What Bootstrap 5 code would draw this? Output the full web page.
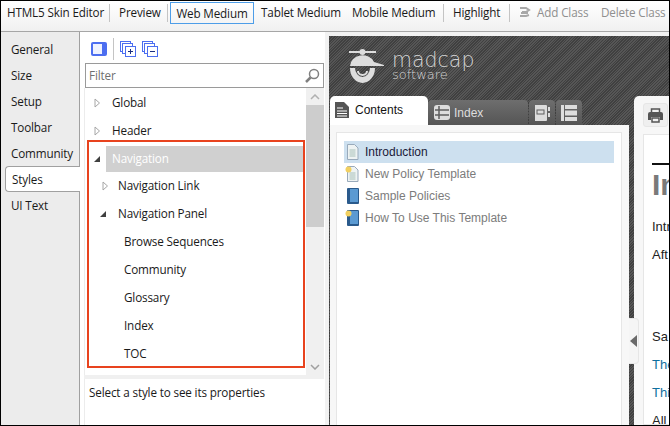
<!DOCTYPE html>
<html lang="en">
<head>
<meta charset="utf-8">
<title>HTML5 Skin Editor</title>
<link href="https://cdn.jsdelivr.net/npm/bootstrap@5.3.0/dist/css/bootstrap.min.css" rel="stylesheet">
<style>
html,body{margin:0;height:100%;overflow:hidden;background:#000}
body{font-family:"Open Sans","Noto Sans",sans-serif;font-size:11.7px;color:#1a1a1a;letter-spacing:-.15px}
.app-win{width:670px;height:426px;border:1px solid #000;overflow:hidden;background:#ececec;display:flex;flex-direction:column}
.top-bar{height:31px;flex:none;background:linear-gradient(#fff,#f0f0f0);display:flex;align-items:flex-start;padding-top:1px;border-bottom:1px solid #a6a6a6;white-space:nowrap}
.top-item{height:21px;line-height:21px;display:block}
.top-sep{width:1px;height:18px;margin-top:2px;background:#c4c4c4;flex:none}
.top-on{border:1px solid #4d9de8;height:22px;line-height:20px;width:84px;text-align:center;margin-left:2px}
.top-off{color:#8f8f8f}
.ti-a{margin-left:6px;width:102px}
.ti-b{margin-left:9px;width:48px}
.ti-c{margin-left:7px;width:91px}
.ti-d{width:91px}
.ti-e{margin-left:9px;width:56px}
.ti-f{margin-left:6px;width:64px}
.ti-ic{margin:4px 0 0 8px;flex:none}
.work{flex:1;display:flex;min-height:0}
.side-tabs{width:79px;flex:none;padding-top:4px;border-right:1px solid #a0a0a0}
.side-tab{height:26px;line-height:26px;padding-left:10px}
.side-tab-on{background:#fff;border:1px solid #a0a0a0;border-right:0;border-radius:4px 0 0 4px;position:relative;line-height:24px;padding-left:6px;width:76px;margin-left:4px}
.ed-panel{width:245px;flex:none;background:#fff;display:flex;flex-direction:column;padding:0 1px 0 4px;position:relative}
.ed-tools{height:31px;flex:none;display:flex;align-items:center;gap:4px;padding:2px 0 0 11px;margin-left:-4px}
.ed-tools svg{display:block}
.ed-rule{width:1px;height:22px;background:#c4c4c4;margin:0 2px}
.ed-gap{margin-left:2px}
.filter-box{height:25px;flex:none;margin-left:1px;border:1px solid #9a9a9a;display:flex;align-items:center;justify-content:space-between;padding:0 3px;color:#6f6f6f}
.tree-wrap{flex:none;height:287px;display:flex;border-left:1px solid #ececec}
.tree-list{flex:1;position:relative;min-width:0;padding-top:1px}
.tree-row{height:27.9px;display:flex;align-items:center}
.tree-l0{padding-left:27px}
.tree-l1{padding-left:33px}
.tree-l2{padding-left:39px}
.tree-sel{background:#d0d0d0;color:#fff;margin:1px 3px .4px 21px;padding-left:6px;height:25.9px}
.tree-arrow{position:absolute}
.arr-a{left:9px}
.arr-b{left:8px}
.arr-c{left:17px}
.arr-d{left:14px}
.hl-box{position:absolute;left:2px;top:52px;width:218px;height:228px;border:2px solid #e8431e;pointer-events:none}
.scroll-y{width:18px;flex:none;background:#f0f0f0;display:flex;flex-direction:column}
.scroll-btn{height:17px;flex:none;display:flex;align-items:center;justify-content:center}
.scroll-thumb{height:122px;background:#cdcdcd;flex:none}
.scroll-rest{flex:1}
.split-h{height:4px;flex:none;background:#f0f0f0}
.props{flex:1;padding:5px 4px;border-left:1px solid #ececec}
.preview{flex:1;min-width:0;display:flex;flex-direction:column;background:#f2f2f2;padding:4px 0 0 4px;overflow:hidden}
.hatch{flex:1;min-height:0;background:#4a4a4a repeating-linear-gradient(135deg,#404040 0 1px,#565656 1px 2px);display:flex;flex-direction:column;font-family:"Liberation Sans",sans-serif;position:relative;letter-spacing:0;font-size:12px}
.logo-row{height:60px;flex:none;padding:8px 0 0 20px;display:flex;align-items:flex-start}
.logo-text{margin:6px 0 0 7px;color:#d4d4d4;font-family:"DejaVu Sans","Lato",sans-serif;font-weight:200}
.logo-a{font-size:20.5px;line-height:20px;height:20px}
.logo-b{font-size:13px;line-height:9px;height:9px}
.prev-body{flex:1;display:flex;min-height:0;padding-left:1px}
.toc-col{width:299px;flex:none;display:flex;flex-direction:column}
.toc-tabs{height:29px;flex:none;display:flex;align-items:flex-end}
.toc-tab{height:25px;background:linear-gradient(#6e6e6e,#555);border-radius:4px 4px 0 0;color:#ddd;display:flex;align-items:center;justify-content:center;margin-right:1px;gap:4px}
.toc-tab-on{height:29px;background:#fff;color:#111;width:98px;gap:6px;justify-content:flex-start;padding:0 0 2px 5px;margin-right:0;border-radius:5px 5px 0 0}
.toc-tab-idx{width:100px;justify-content:flex-start;padding-left:6px}
.toc-tab-ic{width:26px}
.toc-outer{flex:1;background:#f7f7f7;padding:7px 7px 0 6px;min-height:0}
.toc-inner{height:100%;background:#fff;border:1px solid #e6e6e6;border-bottom:0;padding:8px 7px}
.toc-row{height:22px;display:flex;align-items:center;gap:5px;color:#7c7c7c;padding-left:1px}
.toc-row-on{background:#cde0ef;color:#1a1a3a}
.topic-col{flex:1;margin-left:5px;background:#f7f7f7;border-radius:5px 0 0 0;min-width:0;display:flex;flex-direction:column}
.print-btn{width:25px;height:24px;margin:7px 0 0 9px;background:#efefef;border:1px solid #e6e6e6;border-radius:3px;display:flex;align-items:center;justify-content:center;flex:none}
.topic-page{flex:1;background:#fff;margin:7px 0 0 9px;border:1px solid #e6e6e6;border-right:0;padding:28px 0 0 8px;min-height:0;overflow:hidden;white-space:nowrap;font-size:13px;color:#222}
.topic-title{border-top:2px solid #111;font-size:30px;font-weight:700;color:#7a7a7a;line-height:35px;height:50px;padding-top:2px}
.topic-line{height:28px;line-height:28px;color:#222}
.topic-gap{height:54px}
.topic-link{color:#0f6f9f}
.handle{position:absolute;left:300px;top:282px;width:10px;height:46px;background:#f5f5f5;border:1px solid #e6e6e6;border-left:0;border-radius:0 4px 4px 0;display:flex;align-items:center;justify-content:center}
</style>
</head>
<body>
<div class="app-win">
  <div class="top-bar">
    <span class="top-item ti-a">HTML5 Skin Editor</span><span class="top-sep"></span>
    <span class="top-item ti-b">Preview</span><span class="top-sep"></span>
    <span class="top-item top-on">Web Medium</span>
    <span class="top-item ti-c">Tablet Medium</span>
    <span class="top-item ti-d">Mobile Medium</span><span class="top-sep"></span>
    <span class="top-item ti-e">Highlight</span><span class="top-sep"></span>
    <svg class="ti-ic" width="13" height="13" viewBox="0 0 13 13"><path d="M2 2h6l3 2-3 2H4M3 7h7M2 10h6l3-1" fill="none" stroke="#a8a8a8" stroke-width="2"/></svg>
    <span class="top-item top-off ti-f">Add Class</span>
    <span class="top-item top-off">Delete Class</span>
  </div>
  <div class="work">
    <div class="side-tabs">
      <div class="side-tab">General</div>
      <div class="side-tab">Size</div>
      <div class="side-tab">Setup</div>
      <div class="side-tab">Toolbar</div>
      <div class="side-tab">Community</div>
      <div class="side-tab side-tab-on">Styles</div>
      <div class="side-tab">UI Text</div>
    </div>
    <div class="ed-panel">
      <div class="ed-tools">
        <svg width="16" height="14" viewBox="0 0 16 14"><rect width="16" height="14" rx="2" fill="#4c6ef0"/><rect x="2" y="2" width="9" height="10" fill="#eef2ff"/></svg>
        <span class="ed-rule"></span>
        <svg width="16" height="16" viewBox="0 0 16 16" fill="#fff" stroke="#4c6ef0"><rect x=".5" y=".5" width="10" height="10"/><rect x="2.500" y="2.500" width="10" height="10"/><rect x="5.500" y="5.500" width="10" height="10"/><path d="M8 10.500h5M10.500 8v5" stroke="#1c2f80"/></svg>
        <svg class="ed-gap" width="16" height="16" viewBox="0 0 16 16" fill="#fff" stroke="#4c6ef0"><rect x=".5" y=".5" width="10" height="10"/><rect x="2.500" y="2.500" width="10" height="10"/><rect x="5.500" y="5.500" width="10" height="10"/><path d="M8 10.500h5" stroke="#1c2f80"/></svg>
      </div>
      <div class="filter-box"><span>Filter</span>
        <svg width="16" height="16" viewBox="0 0 16 16" fill="none" stroke="#808080"><circle cx="10" cy="6" r="4.500" stroke-width="1.500"/><path d="M6.500 9.500 2 14" stroke-width="2.500"/></svg>
      </div>
      <div class="tree-wrap">
        <div class="tree-list">
          <div class="tree-row tree-l0"><svg class="tree-arrow arr-a" width="7" height="10" viewBox="0 0 7 10"><path d="M1 1l4.500 4L1 9z" fill="#fff" stroke="#a6a6a6"/></svg>Global</div>
          <div class="tree-row tree-l0"><svg class="tree-arrow arr-a" width="7" height="10" viewBox="0 0 7 10"><path d="M1 1l4.500 4L1 9z" fill="#fff" stroke="#a6a6a6"/></svg>Header</div>
          <div class="tree-row tree-sel"><svg class="tree-arrow arr-b" width="8" height="8" viewBox="0 0 8 8"><path d="M7 1v6H1z" fill="#404040"/></svg>Navigation</div>
          <div class="tree-row tree-l1"><svg class="tree-arrow arr-c" width="7" height="10" viewBox="0 0 7 10"><path d="M1 1l4.500 4L1 9z" fill="#fff" stroke="#a6a6a6"/></svg>Navigation Link</div>
          <div class="tree-row tree-l1"><svg class="tree-arrow arr-d" width="8" height="8" viewBox="0 0 8 8"><path d="M7 1v6H1z" fill="#404040"/></svg>Navigation Panel</div>
          <div class="tree-row tree-l2">Browse Sequences</div>
          <div class="tree-row tree-l2">Community</div>
          <div class="tree-row tree-l2">Glossary</div>
          <div class="tree-row tree-l2">Index</div>
          <div class="tree-row tree-l2">TOC</div>
          <div class="hl-box"></div>
        </div>
        <div class="scroll-y">
          <div class="scroll-btn"><svg width="10" height="6" viewBox="0 0 10 6"><path d="M1 5l4-4 4 4" fill="none" stroke="#b0b0b0" stroke-width="1.500"/></svg></div>
          <div class="scroll-thumb"></div>
          <div class="scroll-rest"></div>
          <div class="scroll-btn"><svg width="10" height="6" viewBox="0 0 10 6"><path d="M1 1l4 4 4-4" fill="none" stroke="#a0a0a0" stroke-width="1.500"/></svg></div>
        </div>
      </div>
      <div class="split-h"></div>
      <div class="props">Select a style to see its properties</div>
    </div>
    <div class="preview">
      <div class="hatch">
        <div class="logo-row">
          <svg width="36" height="40" viewBox="0 0 36 40">
            <path d="M0 8h11M16 8h11" stroke="#ddd" stroke-width="2"/><circle cx="13.500" cy="8" r="3" fill="#ddd"/>
            <path d="M1 22a12.500 11 0 0 1 24-4l10 3v1z" fill="#ddd"/>
            <path d="M1 24h25a12.500 15 0 0 1-25 0zM6 24a7.500 9 0 0 0 15 0z" fill="#ddd" fill-rule="evenodd"/>
            <path d="M9 27a4.500 4 0 0 0 9 0" fill="none" stroke="#ddd" stroke-width="2"/>
          </svg>
          <div class="logo-text">
            <div class="logo-a">madcap</div>
            <div class="logo-b">software</div>
          </div>
        </div>
        <div class="prev-body">
          <div class="toc-col">
            <div class="toc-tabs">
              <div class="toc-tab toc-tab-on">
                <svg width="14" height="16" viewBox="0 0 14 16"><path d="M0 0h9l5 5v11H0z" fill="#555"/><path d="M2 6h6M2 9h10M2 11.500h10M2 14h10" stroke="#fff"/></svg>Contents</div>
              <div class="toc-tab toc-tab-idx">
                <svg width="16" height="15" viewBox="0 0 16 15"><rect width="16" height="15" rx="3" fill="#ddd"/><path d="M1 5h14M1 10h14M5 1v13" stroke="#5e5e5e" stroke-width="1.500"/></svg>Index</div>
              <div class="toc-tab toc-tab-ic">
                <svg width="16" height="16" viewBox="0 0 16 16"><path d="M1 0h11a1 1 0 0 1 1 1v14a1 1 0 0 1-1 1H1z" fill="#ddd"/><rect x="3" y="5" width="7" height="4" fill="none" stroke="#5e5e5e"/><path d="M14 2h2v4h-2zM14 8h2v4h-2z" fill="#ddd"/></svg></div>
              <div class="toc-tab toc-tab-ic">
                <svg width="16" height="16" viewBox="0 0 16 16"><path d="M0 0h3v16H0zM4 0h12v4H4zM4 5.500h12v5H4zM4 12h12v4H4z" fill="#ddd"/></svg></div>
            </div>
            <div class="toc-outer">
              <div class="toc-inner">
                <div class="toc-row toc-row-on">
                  <svg width="15" height="16" viewBox="0 0 15 16"><path d="M2.500.5h7l3.500 3.500v11.500h-10.500z" fill="#eef3f3" stroke="#9ab"/><path d="M4.500 6h6M4.500 8h6M4.500 10h6M4.500 12h6" stroke="#a8c0b8"/></svg>Introduction</div>
                <div class="toc-row">
                  <svg width="15" height="16" viewBox="0 0 15 16"><path d="M2.500.5h7l3.500 3.500v11.500h-10.500z" fill="#eef3f3" stroke="#9ab"/><path d="M4.500 7h6M4.500 9h6M4.500 11h6M4.500 13h6" stroke="#a8c0b8"/><circle cx="3.500" cy="3.500" r="3" fill="#f2d060"/></svg>New Policy Template</div>
                <div class="toc-row">
                  <svg width="15" height="16" viewBox="0 0 15 16"><rect x="2" width="12" height="16" rx="1" fill="#2a5a8c"/><rect x="5" y="1" width="8" height="13" fill="#5b9ad2"/></svg>Sample Policies</div>
                <div class="toc-row">
                  <svg width="15" height="16" viewBox="0 0 15 16"><rect x="2" width="12" height="16" rx="1" fill="#2a5a8c"/><rect x="5" y="1" width="8" height="13" fill="#5b9ad2"/><circle cx="3.500" cy="3.500" r="3" fill="#f2d060"/></svg>How To Use This Template</div>
              </div>
            </div>
          </div>
          <div class="topic-col">
            <div class="print-btn">
              <svg width="15" height="15" viewBox="0 0 15 15"><path d="M3.500 1h8v4h-8z" fill="none" stroke="#555" stroke-width="1.500"/><path d="M2 4h11a2 2 0 0 1 2 2v6h-3v-3H3v3H0V6a2 2 0 0 1 2-2z" fill="#555"/><path d="M4 10h7v4H4z" fill="none" stroke="#555" stroke-width="1.500"/></svg></div>
            <div class="topic-page">
              <div class="topic-title">In</div>
              <div class="topic-line">Intr</div>
              <div class="topic-line">Aft</div>
              <div class="topic-gap"></div>
              <div class="topic-line">Sa</div>
              <div class="topic-line topic-link">The</div>
              <div class="topic-line topic-link">Thi</div>
              <div class="topic-line">All</div>
            </div>
          </div>
        </div>
        <div class="handle"><svg width="7" height="12" viewBox="0 0 7 12"><path d="M7 0v12L0 6z" fill="#6a6a6a"/></svg></div>
      </div>
    </div>
  </div>
</div>
</body>
</html>
